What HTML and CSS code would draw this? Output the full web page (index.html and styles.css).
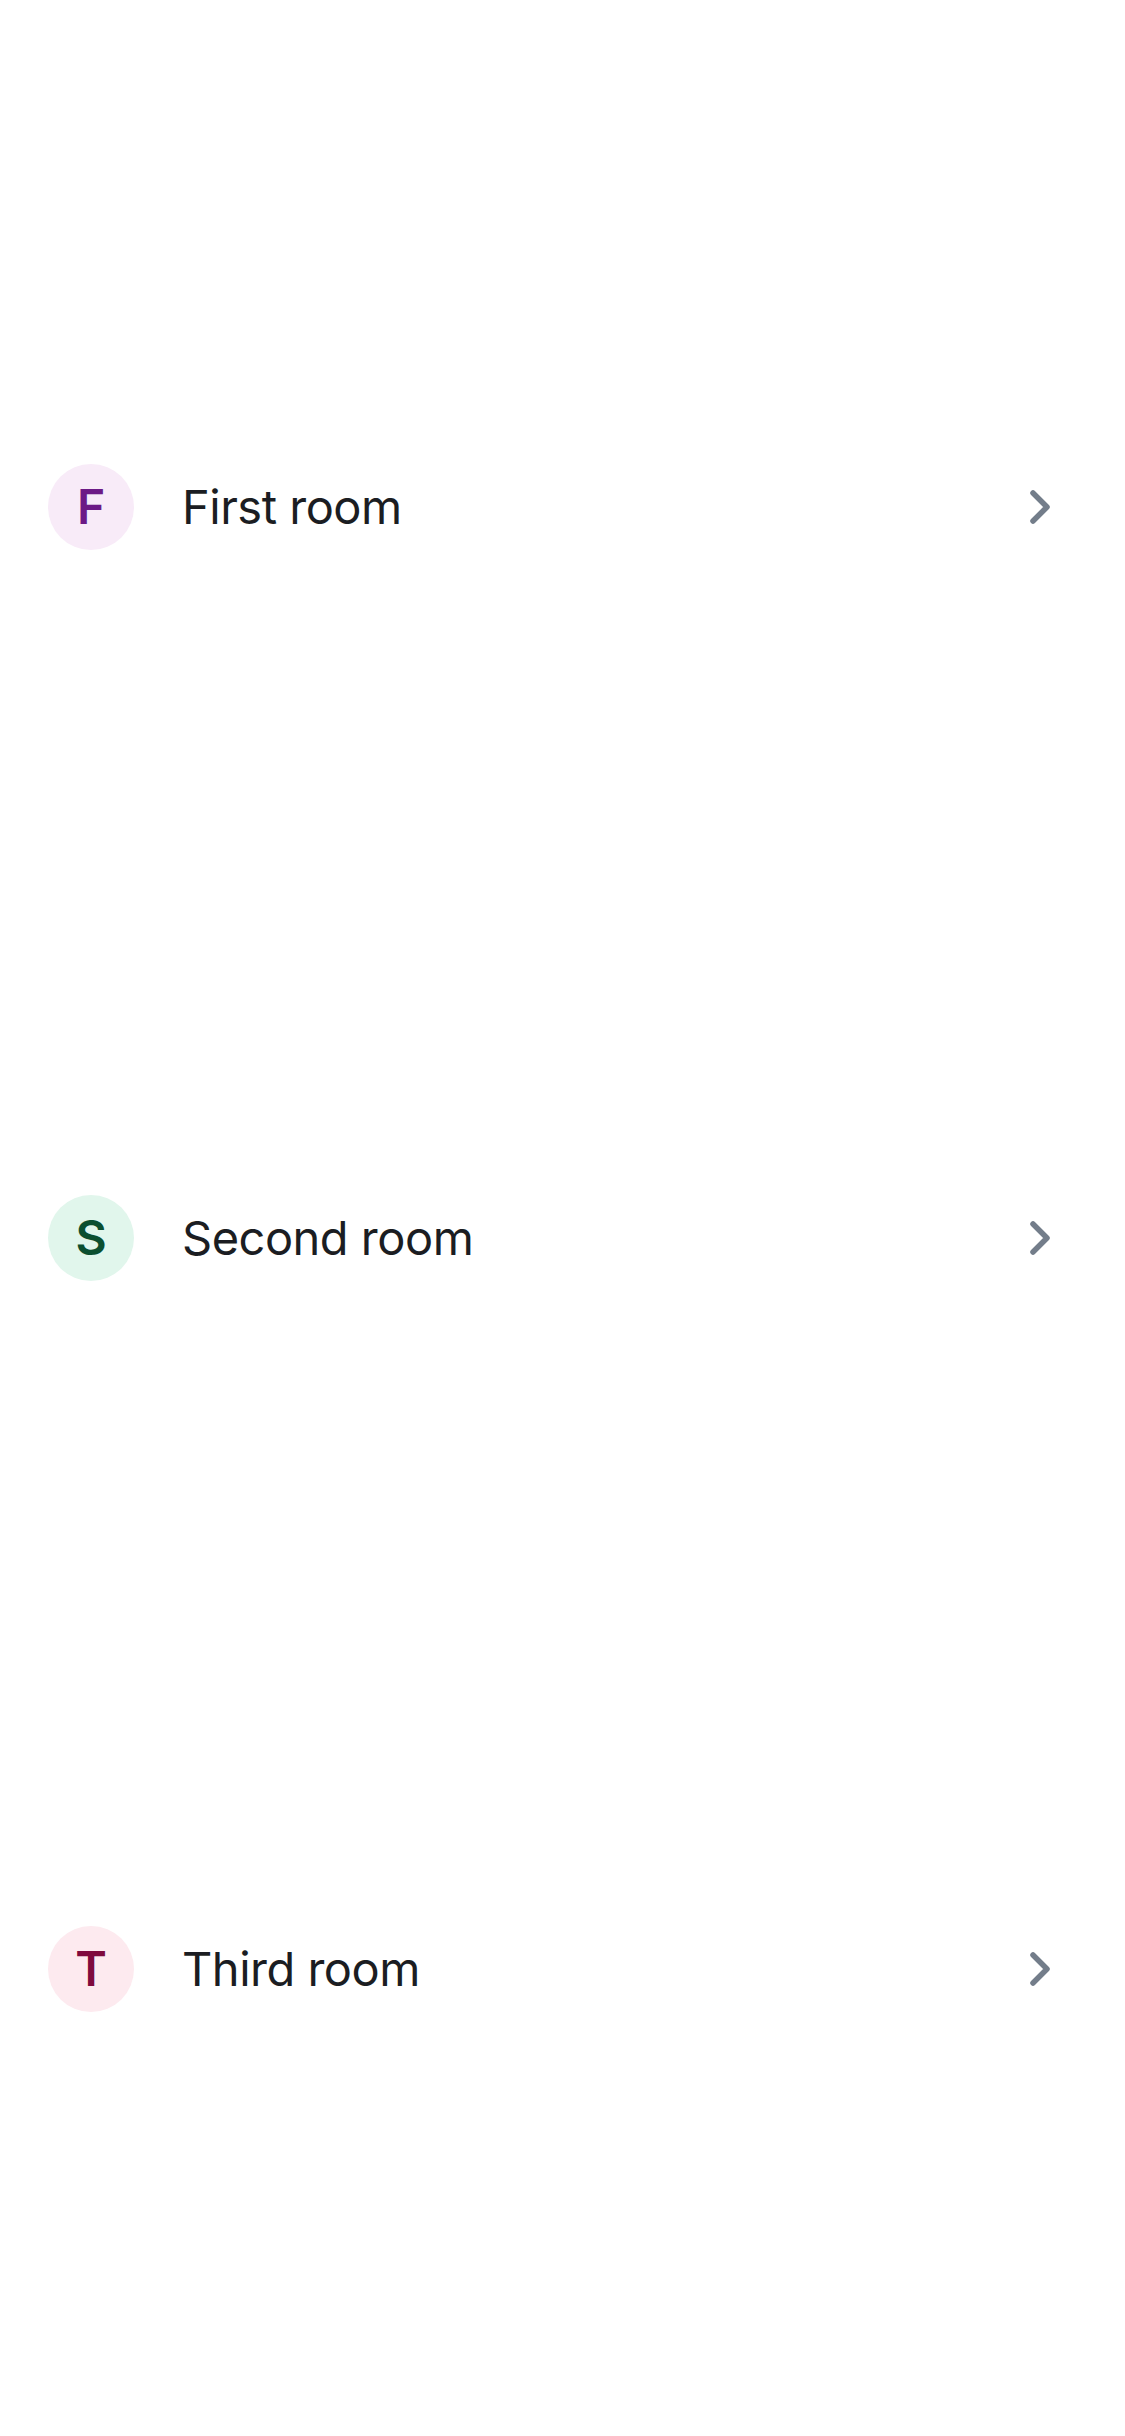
FILE: index.html
```html
<!DOCTYPE html>
<html>
<head>
<meta charset="utf-8">
<link rel="stylesheet" href="styles.css">
</head>
<body>
<main class="screen">
  <ul class="rooms">
    <li class="room">
      <span class="avatar avatar-purple">F</span>
      <span class="name">First room</span>
      <svg class="chev" viewBox="0 0 24 36" width="24" height="36"><path d="M4 4 L18 18 L4 32" fill="none" stroke="currentColor" stroke-width="5.5" stroke-linecap="round" stroke-linejoin="round"/></svg>
    </li>
    <li class="room">
      <span class="avatar avatar-green">S</span>
      <span class="name">Second room</span>
      <svg class="chev" viewBox="0 0 24 36" width="24" height="36"><path d="M4 4 L18 18 L4 32" fill="none" stroke="currentColor" stroke-width="5.5" stroke-linecap="round" stroke-linejoin="round"/></svg>
    </li>
    <li class="room">
      <span class="avatar avatar-red">T</span>
      <span class="name">Third room</span>
      <svg class="chev" viewBox="0 0 24 36" width="24" height="36"><path d="M4 4 L18 18 L4 32" fill="none" stroke="currentColor" stroke-width="5.5" stroke-linecap="round" stroke-linejoin="round"/></svg>
    </li>
  </ul>
</main>
</body>
</html>
```
FILE: styles.css
```css
html, body {
  margin: 0;
  padding: 0;
  background: #ffffff;
}
body {
  font-family: Inter, "Noto Sans", sans-serif;
  color: #1b1d22;
}
.screen {
  width: 1125px;
  height: 2436px;
  box-sizing: border-box;
  padding: 141px 0 102px;
  display: flex;
  flex-direction: column;
}
.rooms {
  list-style: none;
  margin: 0;
  padding: 0;
  flex: 1;
  display: flex;
  flex-direction: column;
}
.room {
  flex: 1;
  display: flex;
  align-items: center;
  padding: 0 72px 0 48px;
}
.avatar {
  width: 86px;
  height: 86px;
  border-radius: 50%;
  display: flex;
  align-items: center;
  justify-content: center;
  font-size: 48px;
  font-weight: 600;
  flex-shrink: 0;
}
.avatar-purple { background: #f8ebf8; color: #6c1a86; }
.avatar-green { background: #e1f6ec; color: #0b4f30; }
.avatar-red { background: #fdeaef; color: #7f0a3d; }
.name {
  flex: 1;
  margin-left: 48px;
  font-size: 47px;
  font-weight: 400;
  letter-spacing: -0.5px;
}
.chev {
  color: #737d8a;
  flex-shrink: 0;
}
```
